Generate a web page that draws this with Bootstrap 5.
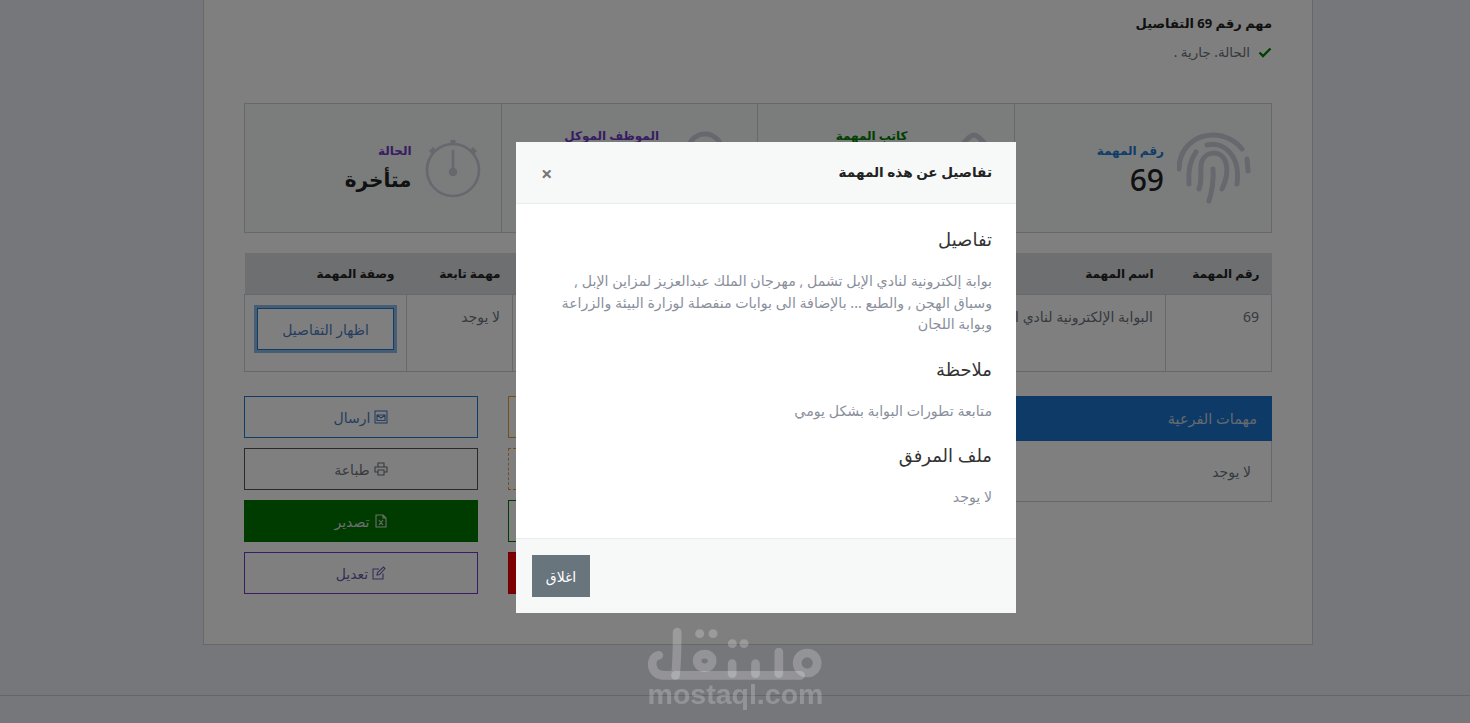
<!DOCTYPE html>
<html lang="ar" dir="rtl">
<head>
  <meta charset="UTF-8">
  <title>تفاصيل المهمة</title>
  <meta name="viewport" content="width=device-width, initial-scale=1">
  <link href="https://cdn.jsdelivr.net/npm/bootstrap@5.3.3/dist/css/bootstrap.min.css" rel="stylesheet">
  <style>
    body {
      font-family: "Noto Sans", "DejaVu Sans", sans-serif;
      background-color: #eceef6;
      color: #6c757d;
      font-size: 14px;
      overflow: hidden;
    }
    .page-card {
      width: 1110px;
      margin-right: 157px;
      margin-bottom: 50px;
      padding: 13px 40px 50px;
      background: #fff;
      border: 1px solid #ccd0d8;
      border-top: 0;
    }
    .page-title { font-size: 13px; font-weight: 700; color: #222; margin: 0 0 8px; line-height: 21px; }
    .state-line { height: 21px; margin-bottom: 40px; font-size: 13.5px; }
    .stat-box { height: 130px; border: 1px solid #ccd0d8; background: #f7f9f9; overflow: hidden; }
    .stat-item { flex: 1 1 25%; padding-right: 20px; gap: 13px; }
    .stat-item + .stat-item { border-right: 1px solid #ccd0d8; }
    .stat-text { padding-top: 8px; }
    .stat-label { font-size: 12px; font-weight: 600; line-height: 16px; }
    .stat-value { font-size: 20px; font-weight: 700; color: #222; line-height: 42px; }
    .stat-num { font-size: 30px; font-weight: 500; }
    .stat-tall { padding-bottom: 64px; }
    .lbl-blue { color: #1e78d0; }
    .lbl-green { color: #008000; }
    .lbl-purple { color: #6f3bc4; }
    .stat-icon { stroke: #cdd0da; fill: none; stroke-linecap: round; }
    .task-table { table-layout: fixed; margin: 20px 0 24px; width: 100%; color: #6c757d; }
    .task-table th { background: #dcdee0; border: 0; font-size: 12px; font-weight: 700; color: #222; padding: 12px 12px 11px; height: 41px; }
    .task-table td { border: 1px solid #ccd0d8; padding: 11px 12px 12px; height: 77px; vertical-align: top; white-space: nowrap; overflow: hidden; }
    .act-grid { display: grid; grid-template-columns: 500px 234px 234px; column-gap: 30px; }
    .act-stack { display: grid; row-gap: 10px; align-content: start; }
    .act-btn { height: 42px; border-radius: 0; font-size: 14px; padding: 0; display: flex; align-items: center; justify-content: center; gap: 4px; background: transparent; color: #6c757d; }
    .act-btn svg { width: 14px; height: 14px; fill: none; stroke: currentColor; stroke-width: 1.1; }
    .btn-blue { border: 1px solid #1e78d0; color: #4c7cc0; }
    .btn-gray { border: 1px solid #555; }
    .btn-export { border: 1px solid #007800; background: #007800; color: #ddd; }
    .btn-purple { border: 1px solid #6f3bc4; color: #6f5bb0; }
    .btn-orange { border: 1px solid #e89a3c; }
    .btn-orange-dash { border: 1px dashed #e89a3c; }
    .btn-green-line { border: 1px solid #007800; }
    .btn-red { border: 1px solid #e00000; background: #f00; }
    .show-btn { display: block; width: 137px; height: 42px; border-radius: 0; padding: 0; margin-top: 2px; border: 1px solid #1e78d0; color: #4c7cc0; font-size: 14px; background: transparent; box-shadow: 0 0 0 3px rgba(30, 120, 208, .5); }
    .sub-panel { height: 106px; border: 1px solid #ccd0d8; border-top: 0; }
    .sub-head { height: 45px; margin: 0 -1px; background: #1a74cc; color: #c8d4e0; padding: 0 15px; display: flex; align-items: center; font-size: 14.5px; }
    .sub-body { padding: 20px; }
    .page-foot { border-top: 1px solid #c8ccd4; height: 28px; }
    .modal-dialog { margin: 142px 454px 0 0; max-width: 500px; width: 500px; }
    .modal-content { border: 0; border-radius: 0; }
    .modal-header, .modal-footer { background: #f7f9f9; border-radius: 0; border-color: #e6eef2; }
    .modal-header { height: 62px; padding: 0 24px 0 25px; }
    .modal-title { font-size: 13.6px; font-weight: 700; color: #222; }
    .modal-x { border: 0; background: transparent; padding: 2px 0 0; font-size: 20px; font-weight: 700; line-height: 1; color: #777; margin-right: auto; }
    .modal-body { padding: 23px 24px 0; height: 334px; }
    .modal-body h5 { font-size: 18px; font-weight: 400; color: #333; margin: 0 0 19px; line-height: 24px; }
    .modal-body p { margin: 0 0 22px; line-height: 21.5px; color: #8a8f9c; font-size: 14.2px; }
    .modal-footer { height: 75px; padding: 16px; justify-content: flex-end; }
    .close-btn { width: 58px; height: 42px; margin: 0; padding: 0; border-radius: 0; background: #68757d; border: 0; font-size: 14px; }
    .wm-logo { position: fixed; left: 647px; top: 627px; z-index: 2000; width: 177px; text-align: center; pointer-events: none; }
    .wm-logo svg { display: block; width: 177px; height: 56px; fill: none; stroke: rgba(255,255,255,.22); stroke-width: 26; stroke-linecap: round; stroke-linejoin: round; }
    .wm-text { display: block; margin-top: -4px; font-family: "Liberation Sans", sans-serif; font-weight: 700; font-size: 28.5px; line-height: 30px; color: rgba(255,255,255,.22); direction: ltr; }
  </style>
</head>
<body>

  <div class="page-card">
    <h1 class="page-title">مهم رقم 69 التفاصيل</h1>
    <div class="state-line d-flex align-items-center gap-2">
      <svg width="14" height="11" viewBox="0 0 14 11" aria-hidden="true"><path d="M1.5 5.5 5 9 12.5 1.5" fill="none" stroke="#008000" stroke-width="2.4"/></svg>
      <span>الحالة. جارية .</span>
    </div>

    <div class="stat-box d-flex">
      <div class="stat-item d-flex align-items-center">
        <svg class="stat-icon" width="74" height="74" viewBox="0 0 74 74" stroke-width="5" aria-hidden="true">
          <path d="M2 38C2 18 17 4 36 4 48 4 59 10 65 18"/>
          <path d="M70 28 71 40"/>
          <path d="M12 53C11 40 13 29 19 21"/>
          <path d="M30 14C46 10 64 24 60 53"/>
          <path d="M22 58C26 48 22 38 25 30 29 20 45 18 49 32 51 40 49 50 45 58"/>
          <path d="M32 70C35 60 37 50 36 38"/>
        </svg>
        <div class="stat-text">
          <div class="stat-label lbl-blue">رقم المهمة</div>
          <div class="stat-value stat-num">69</div>
        </div>
      </div>
      <div class="stat-item d-flex align-items-center">
        <svg class="stat-icon" width="73" height="74" viewBox="0 0 73 74" stroke-width="5" aria-hidden="true">
          <path d="M33 22C45 10 49 4 53 4 57 4 61 10 73 22"/>
        </svg>
        <div class="stat-tall"><div class="stat-label lbl-green">كاتب المهمة</div></div>
      </div>
      <div class="stat-item d-flex align-items-center">
        <svg class="stat-icon" width="65" height="74" viewBox="0 0 65 74" stroke-width="5" aria-hidden="true">
          <circle cx="33" cy="20" r="17"/>
          <path d="M5 70C5 50 18 44 33 44 48 44 61 50 61 70"/>
        </svg>
        <div class="stat-tall"><div class="stat-label lbl-purple">الموظف الموكل</div></div>
      </div>
      <div class="stat-item d-flex align-items-center">
        <svg class="stat-icon" width="56" height="60" viewBox="0 0 56 60" stroke-width="2.6" aria-hidden="true">
          <circle cx="28" cy="32" r="26"/>
          <path d="M28 2V7" stroke-width="5" stroke-linecap="butt"/>
          <path d="M6 11 9 14M50 11 47 14" stroke-width="6" stroke-linecap="butt"/>
          <path d="M28 13V34"/>
          <circle cx="28" cy="34" r="3" fill="#cdd0da"/>
        </svg>
        <div class="stat-text">
          <div class="stat-label lbl-purple">الحالة</div>
          <div class="stat-value">متأخرة</div>
        </div>
      </div>
    </div>

    <table class="table task-table">
      <colgroup><col style="width:106px"><col><col style="width:106px"><col style="width:162px"></colgroup>
      <thead>
        <tr><th>رقم المهمة</th><th>اسم المهمة</th><th>مهمة تابعة</th><th>وصفة المهمة</th></tr>
      </thead>
      <tbody>
        <tr>
          <td>69</td>
          <td>البوابة الإلكترونية لنادي الإبل</td>
          <td>لا يوجد</td>
          <td><button type="button" class="btn show-btn">اظهار التفاصيل</button></td>
        </tr>
      </tbody>
    </table>

    <div class="act-grid">
      <div class="sub-panel">
        <div class="sub-head">مهمات الفرعية</div>
        <div class="sub-body">لا يوجد</div>
      </div>
      <div class="act-stack">
        <button type="button" class="btn act-btn btn-orange" aria-label="إجراء"></button>
        <button type="button" class="btn act-btn btn-orange-dash" aria-label="إجراء"></button>
        <button type="button" class="btn act-btn btn-green-line" aria-label="إجراء"></button>
        <button type="button" class="btn act-btn btn-red" aria-label="إجراء"></button>
      </div>
      <div class="act-stack">
        <button type="button" class="btn act-btn btn-blue">
          <svg viewBox="0 0 14 14" aria-hidden="true"><rect x="1" y="1" width="12" height="12"/><path d="M3 5H11V10.5H3ZM3 5 7 8 11 5"/></svg>ارسال
        </button>
        <button type="button" class="btn act-btn btn-gray">
          <svg viewBox="0 0 14 14" aria-hidden="true"><path d="M4 5V1H10V5M4 10H1V5H13V10H10M4 8H10V13H4Z"/></svg>طباعة
        </button>
        <button type="button" class="btn act-btn btn-export">
          <svg viewBox="0 0 14 14" aria-hidden="true"><path d="M2 1H9L12 4V13H2ZM9 1V4H12M5 6 9 11M9 6 5 11"/></svg>تصدير
        </button>
        <button type="button" class="btn act-btn btn-purple">
          <svg viewBox="0 0 14 14" aria-hidden="true"><path d="M11 7.5V13H1V3H7M5 9 5.5 6.5 11.5 1 13 2.5 7.5 8.5Z"/></svg>تعديل
        </button>
      </div>
    </div>
  </div>
  <div class="page-foot"></div>

  <div class="modal-backdrop show"></div>
  <div class="modal show d-block" tabindex="-1">
    <div class="modal-dialog">
      <div class="modal-content">
        <div class="modal-header">
          <h5 class="modal-title">تفاصيل عن هذه المهمة</h5>
          <button type="button" class="modal-x" aria-label="Close">×</button>
        </div>
        <div class="modal-body">
          <h5>تفاصيل</h5>
          <p>بوابة إلكترونية لنادي الإبل تشمل , مهرجان الملك عبدالعزيز لمزاين الإبل , وسباق الهجن , والطبع ... بالإضافة الى بوابات منفصلة لوزارة البيئة والزراعة وبوابة اللجان</p>
          <h5>ملاحظة</h5>
          <p>متابعة تطورات البوابة بشكل يومي</p>
          <h5>ملف المرفق</h5>
          <p>لا يوجد</p>
        </div>
        <div class="modal-footer">
          <button type="button" class="btn btn-secondary close-btn">اغلاق</button>
        </div>
      </div>
    </div>
  </div>

  <div class="wm-logo">
    <svg viewBox="140 50 530 168" aria-hidden="true">
      <path d="M175 135C145 140 148 195 190 195H225C230 150 230 100 230 65"/>
      <path d="M225 195H600"/>
      <path d="M290 150C290 125 335 125 335 150 335 180 290 180 290 150"/>
      <path d="M395 160V190M465 160V190M535 125V190"/>
      <circle cx="620" cy="158" r="30"/>
      <path d="M297 70H298M337 70H338M395 100H396M430 100H431"/>
    </svg>
    <span class="wm-text">mostaql.com</span>
  </div>

</body>
</html>
